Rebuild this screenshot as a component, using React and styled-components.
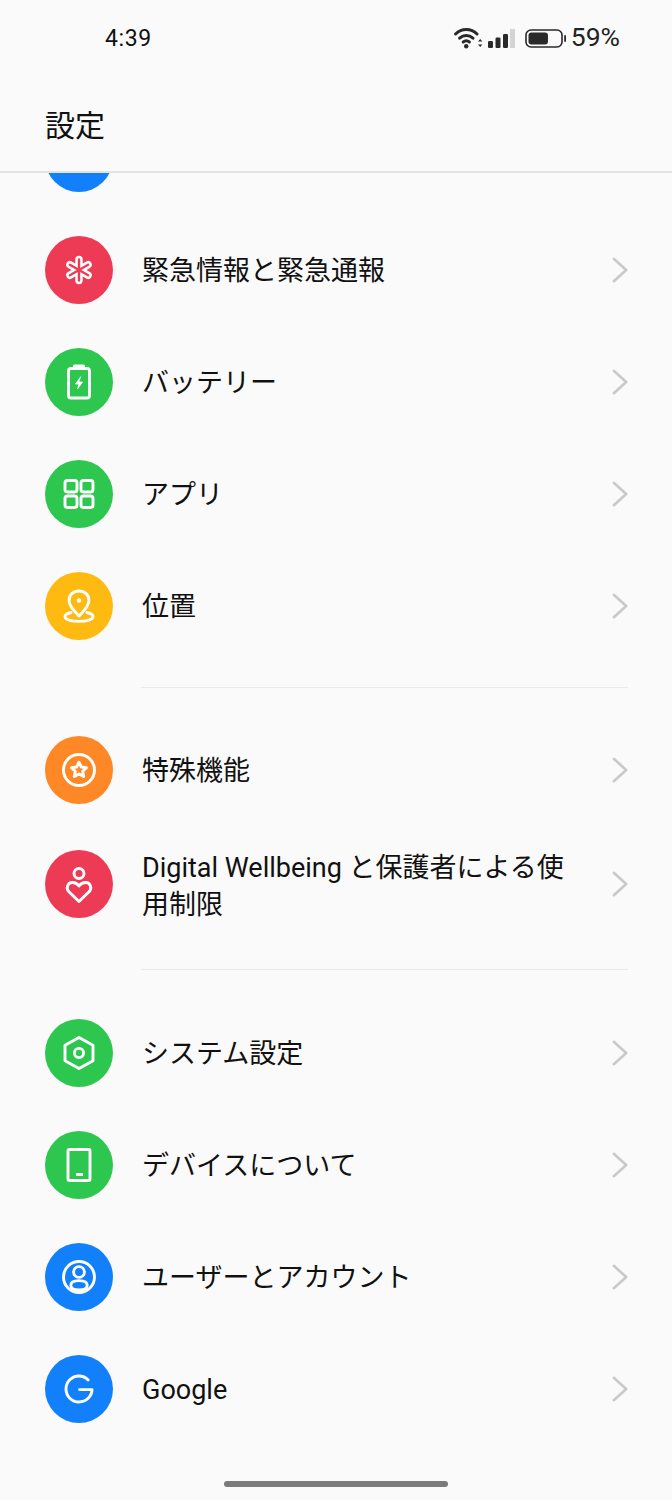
import styled, { createGlobalStyle } from "styled-components";

const GlobalStyle = createGlobalStyle`
    html, body {
        margin: 0;
        padding: 0;
        background: #FAFAFA;
    }
    * {
        box-sizing: border-box;
    }
`;

const RED = "#EE3B55";
const GREEN = "#2DC64F";
const YELLOW = "#FFBA12";
const ORANGE = "#FF8826";
const BLUE = "#1280FB";

const Glyph = ({ children }) => (
    <svg width="68" height="68" viewBox="0 0 68 68" fill="none" stroke="#fff" strokeWidth="2.9" strokeLinecap="round" strokeLinejoin="round">
        {children}
    </svg>
);

const MedicalIcon = () => (
    <Glyph>
        <g stroke="#fff" strokeWidth="7.4">
            <path d="M34 23.5V44.5M24.9 28.7L43.1 39.3M24.9 39.3L43.1 28.7" />
        </g>
        <g stroke={RED} strokeWidth="2.4">
            <path d="M34 23.5V44.5M24.9 28.7L43.1 39.3M24.9 39.3L43.1 28.7" />
        </g>
    </Glyph>
);

const BatteryGlyph = () => (
    <Glyph>
        <rect x="23.5" y="20.5" width="21" height="29.5" rx="2.5" />
        <path d="M29.5 18H38.5" strokeWidth="3.2" />
        <path d="M35.5 29L30.5 36H34L32.5 41L37.5 34H34Z" fill="#fff" strokeWidth="0.8" />
    </Glyph>
);

const AppsIcon = () => (
    <Glyph>
        <rect x="20" y="20.5" width="12" height="11.5" rx="2.4" />
        <rect x="36" y="20.5" width="12" height="11.5" rx="2.4" />
        <rect x="20" y="36" width="12" height="11.5" rx="2.4" />
        <rect x="36" y="36" width="12" height="11.5" rx="2.4" />
    </Glyph>
);

const LocationIcon = () => (
    <Glyph>
        <path d="M34 44C29.5 39 24 34.5 24 28.5C24 22.8 28.4 19 34 19C39.6 19 44 22.8 44 28.5C44 34.5 38.5 39 34 44Z" />
        <circle cx="34" cy="28.5" r="2.2" fill="#fff" stroke="none" />
        <path d="M26 40.5C22 41.5 20 43 20 44.7C20 47.5 26.2 49.4 34 49.4C41.8 49.4 48 47.5 48 44.7C48 43 46 41.5 42 40.5" />
    </Glyph>
);

const StarIcon = () => (
    <Glyph>
        <circle cx="34" cy="34" r="15.5" />
        <path d="M34 26.2L36.3 31L41.5 31.7L37.7 35.3L38.7 40.5L34 38L29.3 40.5L30.3 35.3L26.5 31.7L31.7 31Z" />
    </Glyph>
);

const WellbeingIcon = () => (
    <Glyph>
        <circle cx="34" cy="23.5" r="5" />
        <path d="M34 51.5L24.2 42C20.5 38.3 22.5 32.5 27.5 32.5C30.5 32.5 32.5 34 34 36C35.5 34 37.5 32.5 40.5 32.5C45.5 32.5 47.5 38.3 43.8 42Z" />
    </Glyph>
);

const SystemIcon = () => (
    <Glyph>
        <path d="M34 18.5L48 26.3V41.7L34 49.5L20 41.7V26.3Z" />
        <circle cx="34" cy="34" r="4.6" />
    </Glyph>
);

const DeviceIcon = () => (
    <Glyph>
        <rect x="23" y="18.5" width="22" height="31" rx="1.5" />
        <path d="M31 43.5H38" strokeWidth="2.8" strokeLinecap="butt" />
    </Glyph>
);

const AccountIcon = () => (
    <Glyph>
        <circle cx="34" cy="34" r="15.5" />
        <circle cx="34" cy="29" r="5.4" />
        <path d="M25.8 42.3C25.8 39.4 29 37.6 34 37.6C39 37.6 42.2 39.4 42.2 42.3C42.2 45 39 47 34 47C29 47 25.8 45 25.8 42.3Z" />
    </Glyph>
);

const GoogleIcon = () => (
    <Glyph>
        <path d="M43.2 25C40.9 22.6 37.7 21 34 21C26.8 21 21 26.8 21 34C21 41.2 26.8 47 34 47C41.2 47 47 41.2 47 34.6H34.5" />
    </Glyph>
);

const Chevron = () => (
    <svg width="16" height="26" viewBox="0 0 16 26" fill="none" stroke="#C9C9C9" strokeWidth="2.6" strokeLinecap="round" strokeLinejoin="round">
        <path d="M1.8 1.8L14.2 13L1.8 24.2" />
    </svg>
);

const WifiIcon = () => (
    <svg width="29" height="22" viewBox="0 0 29 22" fill="none" stroke="#2A2A2A" strokeWidth="3" strokeLinecap="round">
        <path d="M1.6 7C7.6 1 17 1 23 7" />
        <path d="M5.6 11.2C9.5 7.6 15 7.6 19 11.2" />
        <path d="M9.2 15C11 13.6 13.5 13.6 15.4 15" />
        <circle cx="12.2" cy="19.2" r="2.2" fill="#2A2A2A" stroke="none" />
        <path d="M24 14.5L26.2 12L28.4 14.5ZM24 17.5L26.2 20L28.4 17.5Z" fill="#2A2A2A" stroke="none" />
    </svg>
);

const SignalIcon = () => (
    <svg width="27" height="19" viewBox="0 0 27 19">
        <rect x="0" y="12" width="5" height="7" rx="1.2" fill="#2A2A2A" />
        <rect x="7.5" y="8.5" width="5" height="10.5" rx="1.2" fill="#2A2A2A" />
        <rect x="15" y="5" width="5" height="14" rx="1.2" fill="#2A2A2A" />
        <rect x="22" y="0" width="5" height="19" fill="#D4D4D4" />
    </svg>
);

const BatteryStatus = ({ level }) => (
    <svg width="41" height="19" viewBox="0 0 41 19">
        <rect x="1" y="1" width="36" height="17" rx="5" fill="none" stroke="#2A2A2A" strokeWidth="1.6" />
        <rect x="3.5" y="3.5" width={level * 0.33} height="12" rx="3" fill="#2A2A2A" />
        <rect x="39.2" y="6" width="1.8" height="7" rx="0.9" fill="#2A2A2A" />
    </svg>
);

const Screen = styled.div`
    position: relative;
    width: 672px;
    height: 1500px;
    overflow: hidden;
    display: flex;
    flex-direction: column;
    background: #FAFAFA;
    color: #111;
    font-family: Roboto, "Noto Sans CJK JP", sans-serif;
`;

const StatusBar = styled.div`
    height: 74px;
    padding: 2px 52px 0 105px;
    display: flex;
    align-items: center;
    justify-content: space-between;
`;

const Time = styled.span`
    font-size: 23px;
    letter-spacing: 0.6px;
`;

const StatusIcons = styled.div`
    display: flex;
    align-items: center;
`;

const Percent = styled.span`
    font-size: 26.5px;
    line-height: 30px;
    margin: 0 0 3px 5px;
    color: #222;
`;

const IconSlot = styled.span`
    display: flex;
    margin-right: ${props => props.$gap}px;
`;

const Header = styled.header`
    height: 99px;
    padding: 0 0 0 45px;
    display: flex;
    align-items: center;
    border-bottom: 2px solid #E3E3E3;
    font-size: 30px;
`;

const List = styled.main`
    flex: 1;
    overflow: hidden;
`;

const Group = styled.section`
    padding: ${props => props.$top}px 0 ${props => props.$bottom}px;
    margin-top: ${props => props.$shift || 0}px;
`;

const Divider = styled.hr`
    margin: 0 44px 0 141px;
    border: 0;
    height: 1px;
    background: #EAEAEA;
`;

const Row = styled.div`
    height: ${props => props.$tall ? 116 : 112}px;
    padding: 0 44px 0 45px;
    display: flex;
    align-items: center;
`;

const Circle = styled.div`
    width: 68px;
    height: 68px;
    flex: none;
    display: flex;
    border-radius: 50%;
    background: ${props => props.$color};
`;

const Label = styled.span`
    flex: 1;
    padding: ${props => props.$tall ? 6 : 3}px 40px 0 29px;
    font-size: 27px;
    line-height: 37px;
`;

const HomeBar = styled.div`
    position: absolute;
    left: 224px;
    bottom: 13px;
    width: 224px;
    height: 6px;
    border-radius: 3px;
    background: #7B7B7B;
`;

const groups = [
    {
        top: 0,
        bottom: 25,
        shift: -71,
        rows: [
            { id: "display", label: "", color: BLUE, icon: null },
            { id: "emergency", label: "緊急情報と緊急通報", color: RED, icon: <MedicalIcon /> },
            { id: "battery", label: "バッテリー", color: GREEN, icon: <BatteryGlyph /> },
            { id: "apps", label: "アプリ", color: GREEN, icon: <AppsIcon /> },
            { id: "location", label: "位置", color: YELLOW, icon: <LocationIcon /> },
        ],
    },
    {
        top: 26,
        bottom: 27,
        rows: [
            { id: "special", label: "特殊機能", color: ORANGE, icon: <StarIcon /> },
            { id: "wellbeing", label: "Digital Wellbeing と保護者による使用制限", color: RED, icon: <WellbeingIcon />, tall: true },
        ],
    },
    {
        top: 27,
        bottom: 0,
        rows: [
            { id: "system", label: "システム設定", color: GREEN, icon: <SystemIcon /> },
            { id: "device", label: "デバイスについて", color: GREEN, icon: <DeviceIcon /> },
            { id: "account", label: "ユーザーとアカウント", color: BLUE, icon: <AccountIcon /> },
            { id: "google", label: "Google", color: BLUE, icon: <GoogleIcon /> },
        ],
    },
];

export default function App() {
    return (
        <>
            <GlobalStyle />
            <Screen>
                <StatusBar>
                    <Time>4:39</Time>
                    <StatusIcons>
                        <IconSlot $gap={5}><WifiIcon /></IconSlot>
                        <IconSlot $gap={10}><SignalIcon /></IconSlot>
                        <BatteryStatus level={59} />
                        <Percent>59%</Percent>
                    </StatusIcons>
                </StatusBar>
                <Header>設定</Header>
                <List>
                    {groups.map((group, i) => (
                        <div key={i}>
                            {i > 0 && <Divider />}
                            <Group $top={group.top} $bottom={group.bottom} $shift={group.shift}>
                                {group.rows.map(row => (
                                    <Row key={row.id} $tall={row.tall}>
                                        <Circle $color={row.color}>{row.icon}</Circle>
                                        <Label $tall={row.tall}>{row.label}</Label>
                                        <Chevron />
                                    </Row>
                                ))}
                            </Group>
                        </div>
                    ))}
                </List>
                <HomeBar />
            </Screen>
        </>
    );
}
